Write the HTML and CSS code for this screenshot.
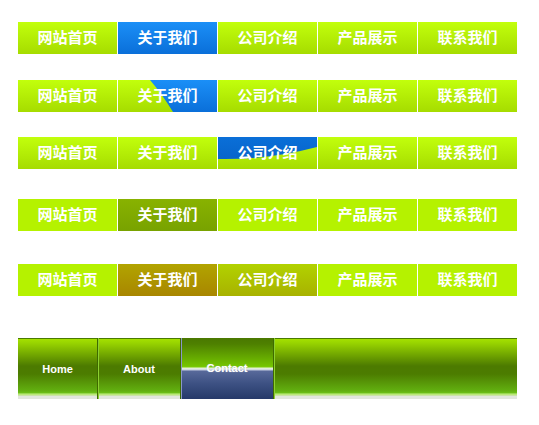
FILE: index.html
```html
<!DOCTYPE html>
<html>
<head>
<meta charset="utf-8">
<link rel="stylesheet" href="styles.css">
</head>
<body>
<div class="page">
  <ul class="nav grad">
    <li>网站首页</li><li class="blue">关于我们</li><li>公司介绍</li><li>产品展示</li><li>联系我们</li>
  </ul>
  <ul class="nav grad r2">
    <li>网站首页</li><li class="diag"><span>关于我们</span></li><li>公司介绍</li><li>产品展示</li><li>联系我们</li>
  </ul>
  <ul class="nav grad r3">
    <li>网站首页</li><li>关于我们</li><li class="wave"><span>公司介绍</span></li><li>产品展示</li><li>联系我们</li>
  </ul>
  <ul class="nav flat r4">
    <li>网站首页</li><li class="dark">关于我们</li><li>公司介绍</li><li>产品展示</li><li>联系我们</li>
  </ul>
  <ul class="nav flat r5">
    <li>网站首页</li><li class="olive">关于我们</li><li class="lime">公司介绍</li><li>产品展示</li><li>联系我们</li>
  </ul>
  <div class="bar">
    <div class="bitem home">Home</div>
    <div class="bitem about">About</div>
    <div class="bitem contact">Contact</div>
    <div class="bitem rest"></div>
  </div>
</div>
</body>
</html>
```

FILE: styles.css
```css
html, body { margin: 0; padding: 0; background: #fff; }
.page { padding: 22px 0 0 18px; }
.nav {
  list-style: none; margin: 0; padding: 0;
  display: flex; width: 499px; height: 32px;
}
.nav li {
  position: relative;
  box-sizing: border-box;
  width: 100px; height: 32px;
  padding-bottom: 4px;
  border-right: 1px solid #fff;
  display: flex; align-items: center; justify-content: center;
  color: #fff;
  font-family: "Noto Sans CJK SC", sans-serif;
  font-weight: bold; font-size: 15px;
  overflow: hidden;
}
.nav li:last-child { border-right: 0; width: 99px; }
.nav li span { position: relative; z-index: 1; }
.grad li { background: linear-gradient(#c2ff0c, #a6dc00); }
.flat li { background: #b5f200; }
.grad li.blue { background: linear-gradient(#1b8ff7, #0a6fd9); }
.r2 { margin-top: 26px; }
.r3 { margin-top: 25px; }
.r4 { margin-top: 30px; }
.r5 { margin-top: 33px; }
.diag::before {
  content: ""; position: absolute; inset: 0;
  background: linear-gradient(#1b8ff7, #0a6fd9);
  clip-path: path("M32 0 Q44 14 55 32 L99 32 L99 0 Z");
}
.wave::before {
  content: ""; position: absolute; inset: 0;
  background: linear-gradient(#0a6fd8, #0660c4);
  clip-path: path("M0 0 L99 0 L99 10 Q50 23 0 22 Z");
}
.flat li.dark { background: linear-gradient(#88b200, #78a200); }
.flat li.olive { background: linear-gradient(#b2a400, #a88600); }
.flat li.lime { background: linear-gradient(#b2d200, #a8b200); }

.bar {
  margin-top: 42px;
  display: flex; width: 499px; height: 61px;
  background: linear-gradient(#4a7a00 0, #4a7a00 1px, #a4e000 1px, #98d400 5px, #4c7a00 28px, #4c7c00 36px, #62b010 53px, #6cc018 55px, #c4f088 56px, #b4e070 57px, #e2e6de 58px, #e2e6de 61px);
}
.bitem {
  height: 61px; box-sizing: border-box;
  display: flex; align-items: center; justify-content: center;
  color: #fff;
  font-family: "Liberation Sans", Arial, sans-serif;
  font-weight: bold; font-size: 11px;
  padding-top: 1px;
}
.home { width: 80px; border-right: 1px solid #3f6a00; }
.about { width: 83px; border-right: 1px solid #3f6a00; box-shadow: inset 1px 0 0 #8cd030; }
.contact {
  width: 93px; height: 63px;
  border-right: 1px solid #3f6a00;
  padding-bottom: 4px;
  background: linear-gradient(#4a7800 0, #4e8000 6px, #74c400 28px, #7ccc08 29px, #e4f2d4 30px, #dfe8e0 31px, #c4cce0 32px, #58699a 33px, #3e5284 45px, #233666 63px);
  box-shadow: inset 1px 0 0 #8a98c8;
  text-shadow: 0 0 1px #b0b8c0;
}
.rest { flex: 1; box-shadow: inset 1px 0 0 #8cd030; }
```
